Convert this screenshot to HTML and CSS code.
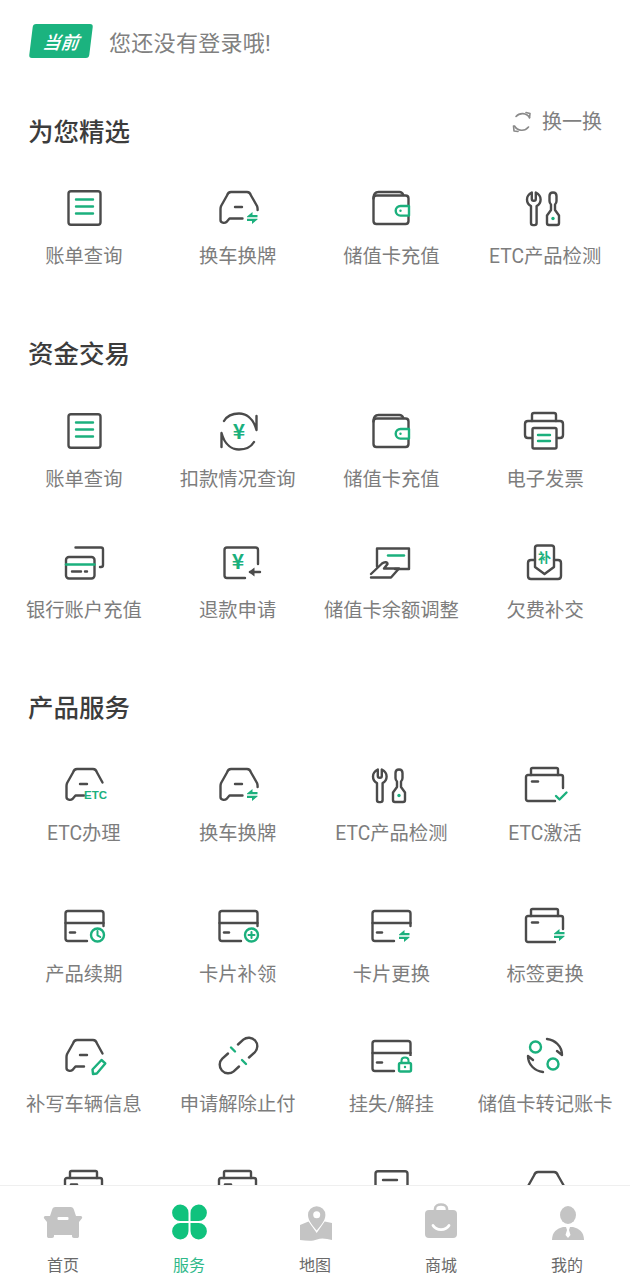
FILE: index.html
```html
<!DOCTYPE html>
<html lang="zh-CN">
<head>
  <meta charset="UTF-8" />
  <meta name="viewport" content="width=device-width, initial-scale=1.0"/>
  <title>服务</title>
  <link rel="stylesheet" href="styles.css">
</head>
<body>
  <svg class="defs" width="0" height="0">
    <symbol id="i-doc" viewBox="0 0 48 48">
      <rect class="ln" x="8.5" y="7.2" width="32" height="33.6" rx="2.5"/>
      <path class="gn" d="M16 15.5h17M16 22.5h17M16 29.5h17"/>
    </symbol>
    <symbol id="i-doc2" viewBox="0 0 48 48">
      <rect class="ln" x="8.5" y="7.2" width="32" height="33.6" rx="2.5"/>
      <path class="ln" d="M16 16h14"/>
    </symbol>
    <symbol id="i-car" viewBox="0 0 48 48">
      <path class="ln" d="M28.5 34.5h-13l-3 3.5c-2 1.500-6 1-6-2V25c0-1 .2-2 .6-3L13 11.500c.7-2.300 2-3.500 4-3.500h16c2 0 3.300 1.200 4 3.500L43 22c.4 1 .6 2 .6 3v1"/>
      <path class="ln" d="M21 23h7"/>
    </symbol>
    <symbol id="i-swap" viewBox="0 0 48 48">
      <use href="#i-car"/>
      <path class="gf" d="M33 32.500l5.500-4.500v3h5v2.200H33zM43.500 35.500L38 40v-3h-5v-2.200h10.500z"/>
    </symbol>
    <symbol id="i-car-cut" viewBox="0 0 48 48">
      <path class="ln" d="M24 34.500h-8.500l-3 3.500c-2 1.500-6 1-6-2V25c0-1 .2-2 .6-3L13 11.500c.7-2.300 2-3.500 4-3.500h16c2 0 3.300 1.200 4 3.500l5.500 10"/>
      <path class="ln" d="M20 23h7"/>
    </symbol>
    <symbol id="i-car-pen" viewBox="0 0 48 48">
      <use href="#i-car-cut"/>
      <path class="gn" d="M33 42l-.5-4.500 9-9.500 3.800 3.400-8.500 10.100z"/>
    </symbol>
    <symbol id="i-wallet" viewBox="0 0 48 48">
      <path class="ln" d="M41.500 21v-6.500c0-2-1-3-3-3h-29c-2 0-3 1-3 3V37c0 2 1 3 3 3h29c2 0 3-1 3-3v-4.500"/>
      <path class="ln" d="M6.500 14.500c0-4 2-6.500 5-6.500h21c2 0 3 1 3.800 3"/>
      <path class="gn" d="M42 22h-8.500a4.800 4.800 0 0 0 0 9.600H42z"/>
      <circle class="gf" cx="33.500" cy="26.800" r="1.200"/>
    </symbol>
    <symbol id="i-tools" viewBox="0 0 48 48">
      <path class="ln" d="M10.800 8.500c-3 1.500-4.800 4-4.800 7 0 3 1.600 5.400 4 6.600v17c0 1.200.8 2 2 2h1.600c1.200 0 2-.8 2-2v-17c2.400-1.200 4-3.600 4-6.600 0-3-1.800-5.500-4.800-7V15c0 1-.8 1.800-1.800 1.800h-.4c-1 0-1.800-.8-1.800-1.800z"/>
      <path class="ln" d="M30 26v-5.500c-1-1-1.500-2-1.500-3.500v-5c0-2 1.500-3.500 3.500-3.500s3.500 1.500 3.500 3.500v5c0 1.500-.5 2.500-1.500 3.500V26l4 5.500V39c0 1.300-.8 2-2 2h-8c-1.200 0-2-.7-2-2v-7.500z"/>
      <circle class="gf" cx="32" cy="34.500" r="1.700"/>
    </symbol>
    <symbol id="i-cycle" viewBox="0 0 48 48">
      <path class="ln" d="M10 14C13 9 19 6.500 25 6.500c6 0 14 3.500 17.500 16.500V9"/>
      <path class="ln" d="M40 35c-3 5-9 7.500-15 7.500-6 0-14-3.500-17.500-16.500v14"/>
    </symbol>
    <symbol id="i-print" viewBox="0 0 48 48">
      <path class="ln" d="M11 14V8c0-1 1-2 2-2h20c1 0 2 1 2 2v6"/>
      <path class="ln" d="M11 31H7c-2 0-3-1-3-3V17c0-2 1-3 3-3h32c2 0 3 1 3 3v11c0 2-1 3-3 3h-3"/>
      <rect class="ln" x="11.500" y="21" width="24" height="20.500" rx="1.500"/>
      <path class="gn" d="M17 28h12M17 34h12"/>
    </symbol>
    <symbol id="i-bank" viewBox="0 0 48 48">
      <path class="ln" d="M15.500 9.500H41c1.200 0 2 .8 2 2V27c0 1.200-.8 2-2 2h-1"/>
      <rect class="ln" x="6" y="19" width="28.500" height="21.500" rx="3"/>
      <path class="gn" d="M6 26.500h28.500"/>
      <path class="ln" d="M12 33.500h9M25 33.500h2"/>
    </symbol>
    <symbol id="i-refund" viewBox="0 0 48 48">
      <path class="ln" d="M31 40H13c-1.500 0-2.500-1-2.500-2.500V12c0-1.500 1-2.500 2.500-2.500h28.500c1.500 0 2.500 1 2.500 2.500v14"/>
      <path class="ln" d="M36 34h10"/>
      <path class="df" d="M40.500 29.500v9l-6-4.500z"/>
    </symbol>
    <symbol id="i-hand" viewBox="0 0 48 48">
      <path class="ln" d="M10 28.500v-18h32V31H28"/>
      <path class="gn" d="M21 17.500h16"/>
      <path class="ln" d="M4 36l11-10.500c2.500-2 5.500-1.500 5.500.5L17 30.500h15l-8 9H4"/>
    </symbol>
    <symbol id="i-owe" viewBox="0 0 48 48">
      <path class="ln" d="M14 22h-4c-2 0-3 1-3 3v13c0 2 1 3 3 3h27c2 0 3-1 3-3V25c0-2-1-3-3-3h-4"/>
      <path class="ln" d="M14 29V10c0-1.500 1-2.500 2.500-2.500h14c1.500 0 2.500 1 2.500 2.500v19l-9.500 7z"/>
    </symbol>
    <symbol id="i-box" viewBox="0 0 48 48">
      <path class="ln" d="M10 14V8.500c0-1 .6-1.500 1.500-1.500h24c1 0 1.500.5 1.500 1.500V14"/>
      <path class="ln" d="M34 40H7c-1.200 0-2-.8-2-2V16c0-1.200.8-2 2-2h33c1.200 0 2 .8 2 2v11"/>
      <path class="ln" d="M11 20.500h6"/>
    </symbol>
    <symbol id="i-box-check" viewBox="0 0 48 48">
      <use href="#i-box"/>
      <path class="gn" d="M35 35l3.500 3.500 7-7"/>
    </symbol>
    <symbol id="i-box-swap" viewBox="0 0 48 48">
      <use href="#i-box"/>
      <path class="gf" d="M33 31.500l5.500-4.500v3h5v2.200H33zM43.500 34.500L38 39v-3h-5v-2.200h10.500z"/>
    </symbol>
    <symbol id="i-card" viewBox="0 0 48 48">
      <path class="ln" d="M27 39H8c-1.500 0-2.500-1-2.500-2.500v-25C5.500 10 6.500 9 8 9h33c1.500 0 2.500 1 2.500 2.500V24"/>
      <path class="ln" d="M5.500 21h38"/>
      <path class="ln" d="M10 30.500h5"/>
    </symbol>
    <symbol id="i-card-clock" viewBox="0 0 48 48">
      <use href="#i-card"/>
      <circle class="gn" cx="37.500" cy="33" r="6.500"/>
      <path class="gn thin" d="M37.500 29v4.300l2.800 1.700"/>
    </symbol>
    <symbol id="i-card-plus" viewBox="0 0 48 48">
      <use href="#i-card"/>
      <circle class="gn" cx="37.500" cy="33" r="6.500"/>
      <path class="gn thin" d="M34.500 33h6M37.500 30v6"/>
    </symbol>
    <symbol id="i-card-swap" viewBox="0 0 48 48">
      <use href="#i-card"/>
      <path class="gf" d="M32 32.500l5.500-4.500v3h5v2.200H32zM42.500 35.500L37 40v-3h-5v-2.200h10.500z"/>
    </symbol>
    <symbol id="i-card-lock" viewBox="0 0 48 48">
      <use href="#i-card"/>
      <rect class="cutf" x="30" y="24" width="16" height="17"/>
      <rect class="gn" x="32" y="31" width="12" height="8.500" rx="1.500"/>
      <path class="gn thin" d="M34.500 31v-2.500c0-4 7-4 7 0V31"/>
      <circle class="gf" cx="38" cy="35" r="1.200"/>
    </symbol>
    <symbol id="i-link" viewBox="0 0 48 48">
      <path class="ln" d="M24 12.500l5.300-4.800a8.500 8.500 0 0 1 11.400 12.600L35 25.500"/>
      <path class="ln" d="M25 34.500l-5.300 4.800A8.500 8.500 0 0 1 8.300 26.700l5.700-5.200"/>
      <path class="gn" d="M17 15.500l4 4M28 28l4 4"/>
    </symbol>
    <symbol id="i-coin" viewBox="0 0 48 48">
      <circle class="gn" cx="14.500" cy="15" r="5.500"/>
      <circle class="gn" cx="32" cy="32" r="5.500"/>
      <path class="ln" d="M26 7c8 1 15 7 15 16l-5-4"/>
      <path class="ln" d="M22 40c-8-1-15-7-15-16l5 4"/>
    </symbol>
  </svg>

  <div class="page">
    <div class="current">
      <span class="badge"><span class="badge-text">当前</span></span>
      <span class="current-text">您还没有登录哦!</span>
    </div>

    <section class="section section-first">
      <div class="section-head">
        <h2>为您精选</h2>
        <div class="refresh">
          <svg width="22" height="22" viewBox="0 0 22 22">
            <path class="rf" d="M5 5.500A8.500 8.500 0 0 1 18.500 6.500M17.500 16A8.500 8.500 0 0 1 3.500 15"/>
            <path class="rf" d="M15 1.500l4 1-.5 4.500M7 20.500l-4-.5-.5-5"/>
          </svg>
          <span>换一换</span>
        </div>
      </div>
      <div class="grid">
        <div class="item"><svg class="ic" viewBox="0 0 48 48"><use href="#i-doc"/></svg><span>账单查询</span></div>
        <div class="item"><svg class="ic" viewBox="0 0 48 48"><use href="#i-swap"/></svg><span>换车换牌</span></div>
        <div class="item"><svg class="ic" viewBox="0 0 48 48"><use href="#i-wallet"/></svg><span>储值卡充值</span></div>
        <div class="item"><svg class="ic" viewBox="0 0 48 48"><use href="#i-tools"/></svg><span>ETC产品检测</span></div>
      </div>
    </section>

    <section class="section">
      <div class="section-head">
        <h2>资金交易</h2>
      </div>
      <div class="grid">
        <div class="item"><svg class="ic" viewBox="0 0 48 48"><use href="#i-doc"/></svg><span>账单查询</span></div>
        <div class="item">
          <svg class="ic" viewBox="0 0 48 48"><use href="#i-cycle"/><text class="ic-yen" x="25" y="32" text-anchor="middle">¥</text></svg>
          <span>扣款情况查询</span>
        </div>
        <div class="item"><svg class="ic" viewBox="0 0 48 48"><use href="#i-wallet"/></svg><span>储值卡充值</span></div>
        <div class="item"><svg class="ic" viewBox="0 0 48 48"><use href="#i-print"/></svg><span>电子发票</span></div>
        <div class="item"><svg class="ic" viewBox="0 0 48 48"><use href="#i-bank"/></svg><span>银行账户充值</span></div>
        <div class="item">
          <svg class="ic" viewBox="0 0 48 48"><use href="#i-refund"/><text class="ic-yen" x="24" y="31" text-anchor="middle">¥</text></svg>
          <span>退款申请</span>
        </div>
        <div class="item"><svg class="ic" viewBox="0 0 48 48"><use href="#i-hand"/></svg><span>储值卡余额调整</span></div>
        <div class="item">
          <svg class="ic" viewBox="0 0 48 48"><use href="#i-owe"/><text class="ic-bu" x="23.5" y="24" text-anchor="middle">补</text></svg>
          <span>欠费补交</span>
        </div>
      </div>
    </section>

    <section class="section">
      <div class="section-head">
        <h2>产品服务</h2>
      </div>
      <div class="grid grid-products">
        <div class="item">
          <svg class="ic" viewBox="0 0 48 48"><use href="#i-car-cut"/><text class="ic-etc" x="24" y="38" textLength="23" lengthAdjust="spacingAndGlyphs">ETC</text></svg>
          <span>ETC办理</span>
        </div>
        <div class="item"><svg class="ic" viewBox="0 0 48 48"><use href="#i-swap"/></svg><span>换车换牌</span></div>
        <div class="item"><svg class="ic" viewBox="0 0 48 48"><use href="#i-tools"/></svg><span>ETC产品检测</span></div>
        <div class="item"><svg class="ic" viewBox="0 0 48 48"><use href="#i-box-check"/></svg><span>ETC激活</span></div>
        <div class="item"><svg class="ic" viewBox="0 0 48 48"><use href="#i-card-clock"/></svg><span>产品续期</span></div>
        <div class="item"><svg class="ic" viewBox="0 0 48 48"><use href="#i-card-plus"/></svg><span>卡片补领</span></div>
        <div class="item"><svg class="ic" viewBox="0 0 48 48"><use href="#i-card-swap"/></svg><span>卡片更换</span></div>
        <div class="item"><svg class="ic" viewBox="0 0 48 48"><use href="#i-box-swap"/></svg><span>标签更换</span></div>
        <div class="item"><svg class="ic" viewBox="0 0 48 48"><use href="#i-car-pen"/></svg><span>补写车辆信息</span></div>
        <div class="item"><svg class="ic" viewBox="0 0 48 48"><use href="#i-link"/></svg><span>申请解除止付</span></div>
        <div class="item"><svg class="ic" viewBox="0 0 48 48"><use href="#i-card-lock"/></svg><span>挂失/解挂</span></div>
        <div class="item"><svg class="ic" viewBox="0 0 48 48"><use href="#i-coin"/></svg><span>储值卡转记账卡</span></div>
        <div class="item"><svg class="ic" viewBox="0 0 48 48"><use href="#i-box"/></svg></div>
        <div class="item"><svg class="ic" viewBox="0 0 48 48"><use href="#i-box"/></svg></div>
        <div class="item"><svg class="ic" viewBox="0 0 48 48"><use href="#i-doc2"/></svg></div>
        <div class="item"><svg class="ic" viewBox="0 0 48 48"><use href="#i-car"/></svg></div>
      </div>
    </section>
  </div>

  <nav class="tabbar">
    <div class="tab">
      <svg class="tab-ic" viewBox="0 0 44 44">
        <path class="tf" d="M11 10c.5-2 1.500-3 3.500-3h15c2 0 3 1 3.500 3l2 6h4.500c1.500 0 2 1 1.500 2.200L38 22v14c0 1.500-.7 2-2 2h-3c-1.300 0-2-.7-2-2v-1H13v1c0 1.300-.7 2-2 2H8c-1.300 0-2-.5-2-2V22l-3-3.800C2.500 17 3 16 4.500 16H9z"/>
        <rect class="cut" x="16.500" y="17" width="11" height="3" rx="1"/>
      </svg>
      <span>首页</span>
    </div>
    <div class="tab tab-on">
      <svg class="tab-ic" viewBox="0 0 44 44">
        <path class="cl" d="M21.500 13v8h-8a8.200 8.200 0 1 1 8-8z"/>
        <path class="cl" d="M23.500 13v8h8a8.200 8.200 0 1 0-8-8z"/>
        <path class="cl" d="M21.500 31v-8h-8a8.200 8.200 0 1 0 8 8z"/>
        <path class="cl" d="M23.500 31v-8h8a8.200 8.200 0 1 1-8 8z"/>
      </svg>
      <span>服务</span>
    </div>
    <div class="tab">
      <svg class="tab-ic" viewBox="0 0 44 44">
        <path class="tf" d="M23.700 30.500c-3-4-8.700-9.500-8.700-15.500a8.700 8.700 0 0 1 17.400 0c0 6-5.700 11.500-8.700 15.500z"/>
        <circle class="cut" cx="23.700" cy="14.800" r="3.500"/>
        <path class="tf" d="M7 25l8.500-3.500 8.200 11.500 8-11.500L39 23v17c-5-1-10-2.500-15-.5s-11 1-17 .5z"/>
      </svg>
      <span>地图</span>
    </div>
    <div class="tab">
      <svg class="tab-ic" viewBox="0 0 44 44">
        <path class="hd" d="M16 12V9c0-6 12-6 12 0v3"/>
        <rect class="tf" x="6" y="10" width="32" height="28" rx="4"/>
        <path class="sm" d="M14 25.500c3.500 5.500 12.500 5.500 16 0"/>
      </svg>
      <span>商城</span>
    </div>
    <div class="tab">
      <svg class="tab-ic" viewBox="0 0 44 44">
        <ellipse class="tf" cx="23" cy="15" rx="8" ry="9"/>
        <path class="tf" d="M7 40c0-8 5-11.500 11-13h10c6 1.500 11 5 11 13z"/>
        <path class="cut" d="M21 27h4l-1 3 1.500 5-2.500 3-2.500-3 1.500-5z"/>
      </svg>
      <span>我的</span>
    </div>
  </nav>
</body>
</html>
```

FILE: styles.css
```css
* {
  margin: 0;
  padding: 0;
  box-sizing: border-box;
}

body {
  width: 630px;
  height: 1280px;
  overflow: hidden;
  background: #fff;
  font-family: Roboto, "Noto Sans CJK SC", sans-serif;
}

.defs {
  position: absolute;
}

.page {
  padding-top: 24px;
}

/* top line */
.current {
  display: flex;
  align-items: center;
  height: 34px;
  padding-left: 31px;
}

.badge {
  display: flex;
  align-items: center;
  justify-content: center;
  width: 60px;
  height: 34px;
  background: #1bb37f;
  border-radius: 3px;
  transform: skewX(-7deg);
}

.badge-text {
  color: #fff;
  font-size: 18px;
  font-weight: 500;
  font-style: italic;
}

.current-text {
  margin-left: 18px;
  font-size: 22px;
  letter-spacing: 0.3px;
  color: #808080;
}

/* sections */
.section {
  margin-top: 69px;
}

.section-first {
  margin-top: 57px;
}

.section-head {
  display: flex;
  justify-content: space-between;
  align-items: flex-start;
  padding: 0 28px;
  height: 34px;
  margin-bottom: 35px;
}

.section + .section .section-head {
  margin-bottom: 36px;
}

.section-head h2 {
  font-size: 25.5px;
  line-height: 35px;
  font-weight: 500;
  color: #3c3c3c;
}

.refresh {
  display: flex;
  align-items: center;
  gap: 9px;
  margin-top: -5px;
  font-size: 20px;
  line-height: 24px;
  color: #808080;
}

.grid {
  display: grid;
  grid-template-columns: repeat(4, 1fr);
  row-gap: 47px;
  padding: 0 8px 0 7px;
}

.grid-products {
  row-gap: 46px;
}

.grid-products .item:nth-child(-n+4) {
  margin-bottom: 11px;
}

.grid-products .item:nth-child(n+9):nth-child(-n+12) {
  margin-bottom: 2px;
}

.item {
  display: flex;
  flex-direction: column;
  align-items: center;
  height: 84px;
  font-size: 19.3px;
  line-height: 24px;
  color: #7d7d7d;
  white-space: nowrap;
}

.ic {
  display: block;
  width: 48px;
  height: 48px;
  margin-bottom: 12.5px;
  overflow: visible;
}

/* icon strokes */
.ln {
  fill: none;
  stroke: #4b4b4b;
  stroke-width: 2.4;
  stroke-linecap: round;
  stroke-linejoin: round;
}

.gn {
  fill: none;
  stroke: #1bb07d;
  stroke-width: 2.4;
  stroke-linecap: round;
  stroke-linejoin: round;
}

.thin {
  stroke-width: 2;
}

.gf {
  fill: #1bb07d;
}

.df {
  fill: #4b4b4b;
}

.cutf {
  fill: #fff;
}

.ic-yen {
  font: 700 21px "Noto Sans CJK SC", sans-serif;
  fill: #1bb07d;
}

.ic-bu {
  font: 700 13px "Noto Sans CJK SC", sans-serif;
  fill: #1bb07d;
}

.ic-etc {
  font: 700 10.5px "Liberation Sans", sans-serif;
  fill: #1bb07d;
}

.rf {
  fill: none;
  stroke: #8a8a8a;
  stroke-width: 1.6;
  stroke-linecap: round;
  stroke-linejoin: round;
}

/* bottom bar */
.tabbar {
  position: fixed;
  left: 0;
  right: 0;
  bottom: 0;
  display: grid;
  grid-template-columns: repeat(5, 1fr);
  height: 95px;
  padding-top: 14px;
  background: #fff;
  border-top: 1px solid #efefef;
}

.tab {
  display: flex;
  flex-direction: column;
  align-items: center;
  font-size: 16px;
  line-height: 22px;
  color: #6a6a6a;
}

.tab-on {
  color: #2fb98a;
}

.tab-ic {
  display: block;
  width: 44px;
  height: 44px;
  margin-bottom: 11px;
}

.tf {
  fill: #c4c4c4;
}

.cut {
  fill: #fff;
}

.cl {
  fill: #10c27d;
}

.hd {
  fill: none;
  stroke: #c4c4c4;
  stroke-width: 2.6;
}

.sm {
  fill: none;
  stroke: #fff;
  stroke-width: 2.8;
  stroke-linecap: round;
}
```
